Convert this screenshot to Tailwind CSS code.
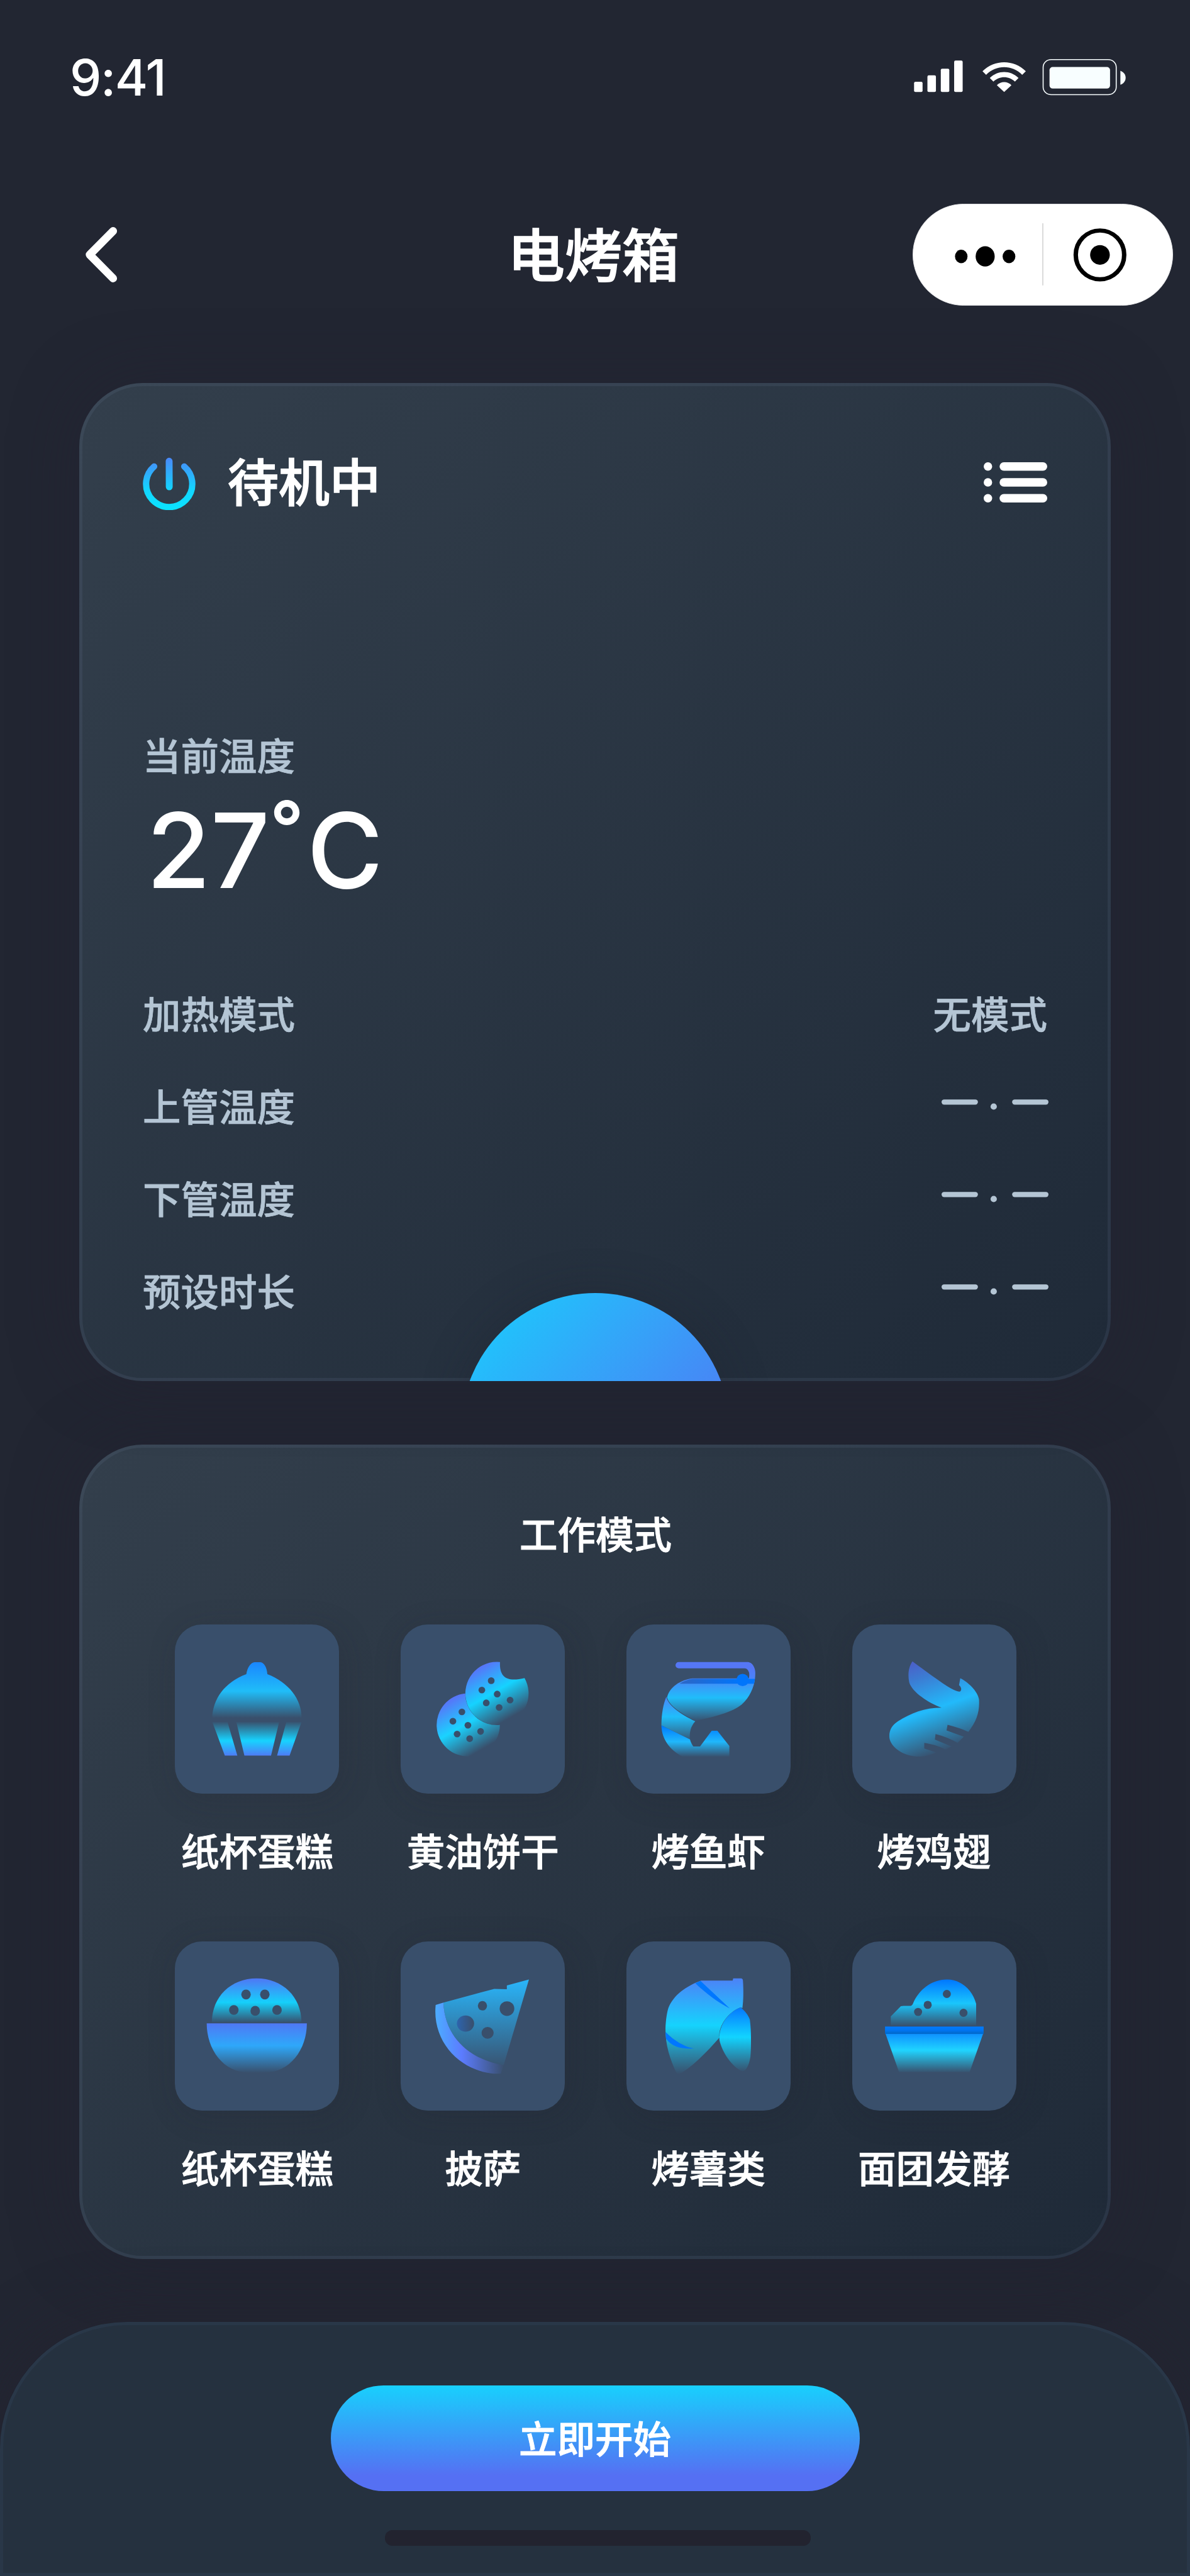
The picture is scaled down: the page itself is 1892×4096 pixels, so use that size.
<!DOCTYPE html>
<html lang="zh-CN">
<head>
<meta charset="utf-8">
<title>电烤箱</title>
<script src="https://cdn.jsdelivr.net/npm/@tailwindcss/browser@4"></script>
</head>
<body class="bg-[#222632]">
<div class="w-[1892px] h-[4096px] overflow-hidden flex flex-col bg-[#222632] text-white font-medium font-['Noto_Sans_CJK_SC',sans-serif]">

  <!-- status bar -->
  <div class="h-[245px] shrink-0 flex items-center justify-between pl-[111px] pr-[102px]">
    <div class="font-['Inter',sans-serif] text-[80px] leading-[80px] tracking-[-1.500px]">9:41</div>
    <svg class="w-[338px] h-[59px]" viewBox="200 145 1050 196" preserveAspectRatio="none" fill="#fff">
      <rect x="204" y="268" width="42" height="54" rx="7"/>
      <rect x="270" y="234" width="42" height="88" rx="7"/>
      <rect x="336" y="199" width="42" height="123" rx="7"/>
      <rect x="402" y="156" width="42" height="166" rx="7"/>
      <path d="M542 212C602 149 696 149 756 212L738 231C688 177 610 177 560 231Z"/>
      <path d="M578 248C619 206 679 206 720 248L702 267C672 236 626 236 596 267Z"/>
      <path d="M613 286C634 264 664 264 685 286L649 322Z"/>
      <rect x="841.5" y="151" width="361" height="185" rx="40" fill="none" stroke="#f8feff" stroke-width="5"/>
      <rect x="873" y="190" width="299" height="114" rx="16" fill="#f8feff"/>
      <path d="M1223 210C1240 217 1249 231 1249 247C1249 263 1240 277 1223 284Z" fill="#f8feff"/>
    </svg>
  </div>

  <!-- navigation bar -->
  <div class="h-[321px] shrink-0 grid grid-cols-[1fr_auto_1fr] items-center pl-[132px] pr-[27px] pb-[2px]">
    <svg class="w-[58px] h-[92px]" viewBox="157 427 69 110" fill="none" stroke="#fff" stroke-width="15" stroke-linecap="round" stroke-linejoin="round"><path d="M214 437L169.500 482L214 527"/></svg>
    <h1 class="text-[91px] leading-[100px] -translate-x-[55px] -translate-y-[5px] [-webkit-text-stroke:1.500px_currentColor]">电烤箱</h1>
    <svg class="w-[414px] h-[162px] justify-self-end" viewBox="199 912 1285 538" preserveAspectRatio="none">
      <rect x="200.500" y="913.500" width="1282" height="535" rx="251" ry="268" fill="#fff" stroke="#e8e9eb" stroke-width="3"/>
      <ellipse cx="439" cy="1190" rx="31" ry="35.500"/>
      <ellipse cx="557" cy="1190" rx="47" ry="53.500"/>
      <ellipse cx="674.500" cy="1190" rx="31.500" ry="35.500"/>
      <rect x="839" y="1015" width="5" height="328" fill="#d3d3d3"/>
      <ellipse cx="1123.500" cy="1182" rx="119.500" ry="129" fill="none" stroke="#000" stroke-width="22"/>
      <ellipse cx="1123.500" cy="1182" rx="48.500" ry="52"/>
    </svg>
  </div>

  <!-- oven state -->
  <section class="relative mt-[43px] ml-[126px] w-[1640px] h-[1587px] shrink-0 rounded-[101px] border-5 border-[#7d89af]/12 bg-linear-135/srgb from-[#333f4c] to-[#1f2a38] bg-origin-border px-[96px] pt-[103px] shadow-[0_0_100px_rgba(36,34,49,0.5)]">
    <div class="flex h-[100px] items-center">
      <svg class="w-[84px] h-[84px] mt-[4px]" viewBox="270 865 100 100" fill="none" stroke="url(#power)" stroke-width="12" stroke-linecap="round">
        <defs><linearGradient id="power" gradientUnits="userSpaceOnUse" x1="0" y1="866" x2="0" y2="965"><stop stop-color="#4a88f8"/><stop offset=".6" stop-color="#13d4ff"/><stop offset="1" stop-color="#0ae4ff"/></linearGradient></defs>
        <path d="M291.500 882.500A43.700 43.700 0 1 0 348.500 882.500"/>
        <path d="M319.900 872.500L320.100 921" stroke-width="13"/>
      </svg>
      <span class="ml-[51px] text-[81px] leading-[100px] -translate-y-[5px] [-webkit-text-stroke:1.500px_currentColor]">待机中</span>
      <svg class="ml-auto w-[101px] h-[64px]" viewBox="60 72 360 228" fill="#fff">
        <circle cx="84" cy="96" r="24"/><circle cx="84" cy="186" r="24"/><circle cx="84" cy="276" r="24"/>
        <rect x="150" y="72" width="270" height="48" rx="24"/><rect x="150" y="162" width="270" height="48" rx="24"/><rect x="150" y="252" width="270" height="48" rx="24"/>
      </svg>
    </div>
    <div class="mt-[342px] text-[60.5px] leading-[80px] text-[#b4c5d4] [-webkit-text-stroke:0.700px_currentColor]">当前温度</div>
    <div class="mt-[23px] ml-[6px] flex h-[180px] font-['Inter',sans-serif] text-[165px] leading-[180px] whitespace-nowrap"><span>27</span><span class="mr-[5px] text-[118px] font-semibold -translate-y-[37px]">°</span><span>C</span></div>
    <div class="mt-[97px] text-[60.5px] leading-[80px] text-[#b4c5d4] [-webkit-text-stroke:0.700px_currentColor]">
      <div class="flex h-[147px] pb-[5px] items-center justify-between"><span>加热模式</span><span>无模式</span></div>
      <div class="flex h-[147px] pb-[5px] items-center justify-between"><span>上管温度</span>
        <svg class="w-[170px] h-[17px] -mt-[2px] -mr-[2px]" viewBox="1780 2079 203 20" fill="#b4c5d4"><rect x="1780" y="2079" width="69" height="10" rx="5"/><circle cx="1879" cy="2092.500" r="6"/><rect x="1914" y="2079" width="69" height="10" rx="5"/></svg></div>
      <div class="flex h-[147px] pb-[5px] items-center justify-between"><span>下管温度</span>
        <svg class="w-[170px] h-[17px] -mt-[1px] -mr-[2px]" viewBox="1780 2079 203 20" fill="#b4c5d4"><rect x="1780" y="2079" width="69" height="10" rx="5"/><circle cx="1879" cy="2092.500" r="6"/><rect x="1914" y="2079" width="69" height="10" rx="5"/></svg></div>
      <div class="flex h-[147px] pb-[5px] items-center justify-between"><span>预设时长</span>
        <svg class="w-[170px] h-[17px] -mt-[2px] -mr-[2px]" viewBox="1780 2079 203 20" fill="#b4c5d4"><rect x="1780" y="2079" width="69" height="10" rx="5"/><circle cx="1879" cy="2092.500" r="6"/><rect x="1914" y="2079" width="69" height="10" rx="5"/></svg></div>
    </div>
    <!-- round button peeking over the lower edge -->
    <div class="absolute -bottom-[5px] left-1/2 h-[240px] w-[600px] -translate-x-1/2 overflow-hidden">
      <div class="mx-auto mt-[100px] h-[425px] w-[425px] rounded-full bg-linear-135/srgb from-[#18d0fd] to-[#5570f3] to-85% shadow-[0_0_70px_rgba(30,33,46,0.3)]"></div>
    </div>
  </section>

  <!-- modes -->
  <section class="mt-[101px] ml-[126px] w-[1640px] h-[1295px] shrink-0 rounded-[101px] border-5 border-[#7d89af]/12 bg-linear-135/srgb from-[#333f4c] to-[#1f2a38] bg-origin-border pt-[95px] pl-[2px] text-[60.5px] leading-[80px] text-center shadow-[0_0_100px_rgba(36,34,49,0.5)] [-webkit-text-stroke:0.900px_currentColor]">
    <h2>工作模式</h2>
    <div class="mt-[106px] grid grid-cols-[repeat(4,261px)] justify-center gap-x-[97.700px] gap-y-[106px]">

      <div>
        <div class="h-[269px] rounded-[43px] bg-[#394f6b] shadow-[6px_8px_50px_rgba(34,34,48,0.18)]">
          <svg class="w-[261px] h-[269px]" viewBox="90 96 930 960" preserveAspectRatio="none">
            <defs>
              <linearGradient id="a1" gradientUnits="userSpaceOnUse" x1="0" y1="310" x2="0" y2="626"><stop stop-color="#1a86ff"/><stop offset=".52" stop-color="#20bdf8"/><stop offset="1" stop-color="#20bdf8" stop-opacity="0"/></linearGradient>
              <linearGradient id="a2" gradientUnits="userSpaceOnUse" x1="0" y1="646" x2="0" y2="842"><stop stop-color="#17d3ff" stop-opacity="0"/><stop offset=".56" stop-color="#17d3ff"/><stop offset="1" stop-color="#4f7af5"/></linearGradient>
            </defs>
            <path fill="url(#a1)" d="M302 624C306 520 370 425 495 378C500 340 522 310 542 310H575C595 312 612 340 614 378C735 425 808 520 808 624Z"/>
            <path fill="url(#a2)" d="M302 648H388L444 840H373ZM438 648H681L635 840H484ZM722 648H808L740 840H669Z"/>
          </svg>
        </div>
        <div class="mt-[49px]">纸杯蛋糕</div>
      </div>

      <div>
        <div class="h-[269px] rounded-[43px] bg-[#394f6b] shadow-[6px_8px_50px_rgba(34,34,48,0.18)]">
          <svg class="w-[261px] h-[269px]" viewBox="78 96 930 960" preserveAspectRatio="none">
            <defs>
              <linearGradient id="b1" gradientUnits="userSpaceOnUse" x1="530" y1="328" x2="701" y2="624"><stop stop-color="#5a70f8"/><stop offset=".5" stop-color="#15d3ff"/><stop offset="1" stop-color="#15d3ff" stop-opacity="0"/></linearGradient>
              <linearGradient id="b2" gradientUnits="userSpaceOnUse" x1="368" y1="509" x2="539" y2="805"><stop stop-color="#5a70f8"/><stop offset=".5" stop-color="#1ad3ff"/><stop offset="1" stop-color="#1ad3ff" stop-opacity="0"/></linearGradient>
            </defs>
            <path fill="url(#b2)" d="M444 488A179 179 0 1 0 640 666A179 179 0 0 1 444 488Z"/>
            <path fill="url(#b1)" d="M641 309C636 395 680 425 780 400A179 179 0 1 1 641 309Z"/>
            <g fill="#394f6b"><circle cx="591" cy="415" r="19"/><circle cx="538" cy="468" r="19"/><circle cx="625" cy="491" r="19"/><circle cx="563" cy="541" r="19"/><circle cx="698" cy="525" r="19"/><circle cx="636" cy="567" r="19"/>
            <circle cx="425" cy="592" r="19"/><circle cx="374" cy="645" r="19"/><circle cx="459" cy="668" r="19"/><circle cx="398" cy="718" r="19"/><circle cx="531" cy="703" r="19"/><circle cx="469" cy="744" r="19"/></g>
          </svg>
        </div>
        <div class="mt-[49px]">黄油饼干</div>
      </div>

      <div>
        <div class="h-[269px] rounded-[43px] bg-[#394f6b] shadow-[6px_8px_50px_rgba(34,34,48,0.18)]">
          <svg class="w-[261px] h-[269px]" viewBox="102 96 930 960" preserveAspectRatio="none">
            <defs>
              <linearGradient id="c1" gradientUnits="userSpaceOnUse" x1="0" y1="402" x2="0" y2="646"><stop stop-color="#4a82f7"/><stop offset=".45" stop-color="#20bdfa"/><stop offset="1" stop-color="#20bdfa" stop-opacity="0"/></linearGradient>
              <linearGradient id="c2" gradientUnits="userSpaceOnUse" x1="0" y1="506" x2="0" y2="765"><stop stop-color="#4a84f7"/><stop offset=".44" stop-color="#1fbefb"/><stop offset="1" stop-color="#1fbefb" stop-opacity="0"/></linearGradient>
              <linearGradient id="c3" gradientUnits="userSpaceOnUse" x1="0" y1="675" x2="0" y2="848"><stop stop-color="#007dff"/><stop offset=".5" stop-color="#20b8fc"/><stop offset="1" stop-color="#20b8fc" stop-opacity="0"/></linearGradient>
              <linearGradient id="c4" gradientUnits="userSpaceOnUse" x1="403" y1="0" x2="740" y2="0"><stop stop-color="#2d66c4"/><stop offset="1" stop-color="#0075fb"/></linearGradient>
              <linearGradient id="c5" gradientUnits="userSpaceOnUse" x1="0" y1="340" x2="0" y2="405"><stop stop-color="#5577f5"/><stop offset="1" stop-color="#4a83f7"/></linearGradient>
            </defs>
            <path fill="url(#c5)" d="M398 309H792C815 312 832 340 832 370Q832 390 830 405H794C799 395 798 382 797 370C792 355 785 346 772 345H398A18 18 0 0 1 398 309Z"/>
            <path fill="url(#c1)" d="M475 402H830C826 450 800 510 755 550C700 595 600 620 492 643C420 605 345 560 332 510C345 450 410 410 475 402Z"/>
            <path fill="url(#c4)" d="M475 405H830L825 432H403C425 418 450 408 475 405Z"/>
            <circle cx="760" cy="411" r="35" fill="#0075fb"/>
            <path fill="url(#c2)" d="M328 506C335 550 400 600 492 646C465 675 458 710 462 748L300 669C301 600 310 550 328 506Z"/>
            <path fill="url(#c3)" d="M300 669L462 748C466 765 475 780 481 788H519L585 699H617L685 786V846H420C350 810 302 750 300 669Z"/>
          </svg>
        </div>
        <div class="mt-[49px]">烤鱼虾</div>
      </div>

      <div>
        <div class="h-[269px] rounded-[43px] bg-[#394f6b] shadow-[6px_8px_50px_rgba(34,34,48,0.18)]">
          <svg class="w-[261px] h-[269px]" viewBox="90 96 930 960" preserveAspectRatio="none">
            <defs><linearGradient id="d1" gradientUnits="userSpaceOnUse" x1="420" y1="315" x2="600" y2="822"><stop stop-color="#4b5fc8"/><stop offset=".18" stop-color="#3c7bd2"/><stop offset=".54" stop-color="#22bafb"/><stop offset="1" stop-color="#22bafb" stop-opacity="0"/></linearGradient></defs>
            <path fill="url(#d1)" d="M431 306C520 370 660 480 697 477C708 478 714 455 695 440L702 401C750 425 800 475 808 520C813 590 795 645 748 705Q690 680 630 665L624 697L722 733L687 768Q630 735 562 718L558 749L652 788L618 806C580 785 540 775 498 768V800L565 822C530 840 490 847 455 845C370 840 300 785 300 730C300 690 320 665 350 645C420 600 500 568 596 568C520 540 430 480 413 425C403 380 410 335 431 306Z"/>
          </svg>
        </div>
        <div class="mt-[49px]">烤鸡翅</div>
      </div>

      <div>
        <div class="h-[269px] rounded-[43px] bg-[#394f6b] shadow-[6px_8px_50px_rgba(34,34,48,0.18)]">
          <svg class="w-[261px] h-[269px]" viewBox="55 66 572 960" preserveAspectRatio="none">
            <defs>
              <linearGradient id="e1" gradientUnits="userSpaceOnUse" x1="0" y1="276" x2="0" y2="528"><stop stop-color="#4f77f5"/><stop offset=".54" stop-color="#15d0fb"/><stop offset="1" stop-color="#15d0fb" stop-opacity="0"/></linearGradient>
              <linearGradient id="e2" gradientUnits="userSpaceOnUse" x1="0" y1="531" x2="0" y2="812"><stop stop-color="#4f78f4"/><stop offset=".45" stop-color="#2ea8fa"/><stop offset="1" stop-color="#2ea8fa" stop-opacity="0"/></linearGradient>
            </defs>
            <path fill="url(#e1)" d="M184 526C184 380 250 276 340 276C430 276 496 380 496 526Z"/>
            <path fill="url(#e2)" d="M166 531H515C515 680 455 810 370 810H310C225 810 166 680 166 531Z"/>
            <g fill="#394f6b"><ellipse cx="303" cy="367" rx="16.500" ry="28"/><ellipse cx="368.500" cy="367" rx="16.500" ry="28"/><ellipse cx="260.500" cy="455" rx="16.500" ry="28"/><ellipse cx="335" cy="460" rx="16.500" ry="28"/><ellipse cx="411" cy="455" rx="16.500" ry="28"/></g>
          </svg>
        </div>
        <div class="mt-[49px]">纸杯蛋糕</div>
      </div>

      <div>
        <div class="h-[269px] rounded-[43px] bg-[#394f6b] shadow-[6px_8px_50px_rgba(34,34,48,0.18)]">
          <svg class="w-[261px] h-[269px]" viewBox="841 66 572 960" preserveAspectRatio="none">
            <defs>
              <linearGradient id="f1" gradientUnits="userSpaceOnUse" x1="0" y1="282" x2="0" y2="800"><stop stop-color="#29b6fb"/><stop offset="1" stop-color="#29b6fb" stop-opacity="0"/></linearGradient>
              <linearGradient id="f2" gradientUnits="userSpaceOnUse" x1="963" y1="0" x2="1202" y2="0"><stop stop-color="#4cacff"/><stop offset=".38" stop-color="#5c7cff"/><stop offset="1" stop-color="#5c7cff" stop-opacity="0"/></linearGradient>
              <linearGradient id="f3" gradientUnits="userSpaceOnUse" x1="1037" y1="0" x2="1097" y2="0"><stop stop-color="#2d64ae"/><stop offset="1" stop-color="#394f6b"/></linearGradient>
            </defs>
            <path fill="url(#f1)" d="M990 413L1167 335L1211 337V316L1288 282L1200 768C1090 740 995 620 990 413Z"/>
            <path fill="url(#f2)" d="M963 426L990 413C995 620 1090 740 1200 768L1190 816H1165C1050 800 950 640 963 426Z"/>
            <g fill="#394f6b"><ellipse cx="1126" cy="431" rx="16" ry="27"/><ellipse cx="1211.500" cy="447" rx="25.500" ry="41.500"/><ellipse cx="1144" cy="585" rx="21" ry="33.500"/><ellipse cx="1067" cy="532" rx="30" ry="46" fill="url(#f3)"/></g>
          </svg>
        </div>
        <div class="mt-[49px]">披萨</div>
      </div>

      <div>
        <div class="h-[269px] rounded-[43px] bg-[#394f6b] shadow-[6px_8px_50px_rgba(34,34,48,0.18)]">
          <svg class="w-[261px] h-[269px]" viewBox="63 66 572 960" preserveAspectRatio="none">
            <defs>
              <linearGradient id="g1" gradientUnits="userSpaceOnUse" x1="0" y1="276" x2="0" y2="820"><stop stop-color="#4c82f7"/><stop offset=".49" stop-color="#15d3fd"/><stop offset="1" stop-color="#15d3fd" stop-opacity="0"/></linearGradient>
              <linearGradient id="g2" gradientUnits="userSpaceOnUse" x1="0" y1="445" x2="0" y2="808"><stop stop-color="#067bff"/><stop offset=".45" stop-color="#12d4ff"/><stop offset="1" stop-color="#12d4ff" stop-opacity="0"/></linearGradient>
            </defs>
            <path fill="url(#g1)" d="M323 288H433L435 276H463Q469 278 469 290C471 340 471 400 467 444L461 440C420 465 383 540 387 612C340 700 290 780 247 820H240C215 740 198 650 199 560C200 510 205 460 210 440C228 370 270 320 323 288Z"/>
            <path fill="#0077ff" d="M303 303L321 290L423 446C380 410 340 360 303 303ZM199 580L201 618C220 660 250 678 299 674C265 665 230 630 199 580Z"/>
            <path fill="url(#g2)" d="M461 440C475 460 488 485 493 510C498 570 498 660 495 720C490 770 480 800 468 803C430 780 395 690 387 625C383 540 420 465 461 440Z"/>
          </svg>
        </div>
        <div class="mt-[49px]">烤薯类</div>
      </div>

      <div>
        <div class="h-[269px] rounded-[43px] bg-[#394f6b] shadow-[6px_8px_50px_rgba(34,34,48,0.18)]">
          <svg class="w-[261px] h-[269px]" viewBox="849 66 571 960" preserveAspectRatio="none">
            <defs>
              <linearGradient id="h1" gradientUnits="userSpaceOnUse" x1="0" y1="282" x2="0" y2="548"><stop stop-color="#0077ff"/><stop offset=".51" stop-color="#1ac6fc"/><stop offset="1" stop-color="#1ac6fc" stop-opacity="0"/></linearGradient>
              <linearGradient id="h2" gradientUnits="userSpaceOnUse" x1="0" y1="591" x2="0" y2="812"><stop stop-color="#0f92ff"/><stop offset=".42" stop-color="#20d4ff"/><stop offset="1" stop-color="#20d4ff" stop-opacity="0"/></linearGradient>
              <linearGradient id="h3" gradientUnits="userSpaceOnUse" x1="0" y1="549" x2="0" y2="591"><stop stop-color="#007bff"/><stop offset=".5" stop-color="#0074f2"/><stop offset="1" stop-color="#0067c6"/></linearGradient>
            </defs>
            <path fill="url(#h1)" d="M983 544V492L1018 434L1028 432H1050Q1056 432 1060 420C1080 340 1125 282 1178 282C1230 282 1268 345 1280 420V544Z"/>
            <path fill="url(#h2)" d="M965 591H1304L1257 808H1012Z"/>
            <rect x="963" y="549" width="343" height="42" fill="url(#h3)"/>
            <g fill="#394f6b"><ellipse cx="1178" cy="364" rx="14" ry="23"/><ellipse cx="1111.500" cy="426" rx="14" ry="23"/><ellipse cx="1078" cy="466" rx="14" ry="23"/><ellipse cx="1236" cy="471" rx="14" ry="23"/></g>
          </svg>
        </div>
        <div class="mt-[49px]">面团发酵</div>
      </div>

    </div>
  </section>

  <!-- start panel -->
  <footer class="mt-[100px] h-[404px] shrink-0 rounded-t-[202px] border-5 border-[#293748] bg-[#25313f] pt-[96px] flex flex-col items-center shadow-[0_0_100px_rgba(36,34,47,0.6)]">
    <button class="h-[168px] w-[841px] shrink-0 rounded-full bg-linear-to-b/srgb from-[#18d0fd] to-[#5570f3] to-85% pb-[5px] text-[60.5px] leading-[80px] font-medium [-webkit-text-stroke:0.900px_currentColor]">立即开始</button>
    <div class="mt-[62px] ml-[8px] h-[25px] w-[677px] shrink-0 rounded-[12px] bg-[#22232f]"></div>
  </footer>
</div>
</body>
</html>
